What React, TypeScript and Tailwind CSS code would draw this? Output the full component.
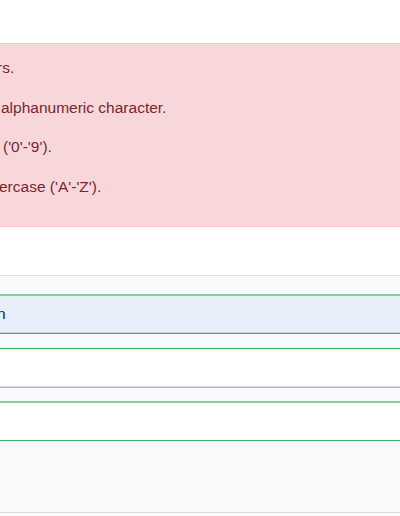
const errors = [
  { text: 'rs.', offset: '-ml-[3px]' },
  { text: 'alphanumeric character.', offset: 'ml-[1px]' },
  { text: "('0'-'9').", offset: 'ml-[3px]' },
  { text: "ercase ('A'-'Z').", offset: '-ml-[1px]' },
];

const App = () => {
  return (
    <div className="h-[516px] w-[400px] overflow-hidden bg-white font-['Liberation_Sans',Arial,sans-serif]">
      {/* validation summary, cut off on both sides */}
      <div className="mt-[43px] h-[184px] overflow-hidden border-y border-[#f5c6cb] bg-[#f8d7da] pt-[4px] text-[15.5px] leading-[39.5px] text-[#7a2530]">
        {errors.map((e) => (
          <div key={e.text} className={`whitespace-nowrap ${e.offset}`}>
            {e.text}
          </div>
        ))}
      </div>

      {/* list panel */}
      <div className="mt-[48px] border-y border-t-[#dee2e6] border-b-[#d5d8dc] bg-[#f8f9fa]">
        <div className="h-[18px]" />
        <div className="h-[2px] bg-[#84cd98]" />
        <div className="flex h-[36px] items-center bg-[#e8effb] text-[15.5px] text-[#212529]">
          <span className="-ml-[3px]">n</span>
        </div>
        <div className="h-px bg-[#ccd0d5]" />
        <div className="h-px bg-[#3bb75d]" />
        <div className="h-[14px]" />
        <div className="h-px bg-[#2fb658]" />
        <div className="h-[37px] bg-white" />
        <div className="h-px bg-[#d6dadd]" />
        <div className="h-px bg-[#8dd2a0]" />
        <div className="h-[13px]" />
        <div className="h-[2px] bg-[#86cf9a]" />
        <div className="h-[37px] bg-white" />
        <div className="h-px bg-[#34b85b]" />
        <div className="h-[71px]" />
      </div>
    </div>
  );
};

export default App;
